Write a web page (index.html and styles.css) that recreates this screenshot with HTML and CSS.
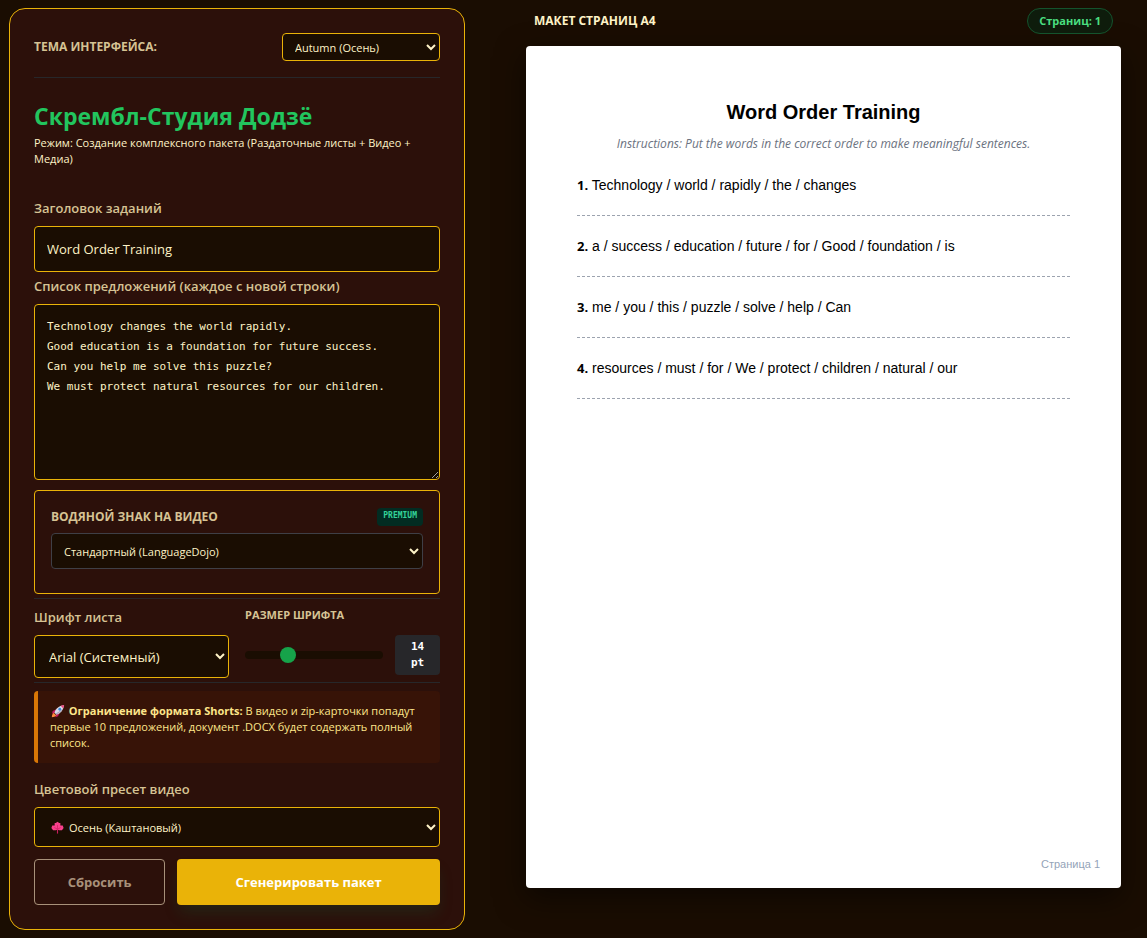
FILE: index.html
```
<!DOCTYPE html>
<html lang="ru">
<head>
    <meta charset="UTF-8">
    <meta name="viewport" content="width=device-width, initial-scale=1.0">
    <title>Скрембл-Студия Додзё</title>
    <link rel="stylesheet" href="styles.css">
</head>
<body>
    <div class="layout">
        <form class="panel" id="studioForm">
            <div class="theme-row">
                <label class="caps-label" for="theme">Тема интерфейса:</label>
                <select class="theme-select" id="theme">
                    <option>Autumn (Осень)</option>
                </select>
            </div>

            <header class="intro">
                <h1>Скрембл-Студия Додзё</h1>
                <p>Режим: Создание комплексного пакета (Раздаточные листы + Видео + Медиа)</p>
            </header>

            <div class="field">
                <label for="title">Заголовок заданий</label>
                <input type="text" id="title" value="Word Order Training">
            </div>

            <div class="field">
                <label for="sentences">Список предложений (каждое с новой строки)</label>
                <textarea id="sentences" spellcheck="false">Technology changes the world rapidly.
Good education is a foundation for future success.
Can you help me solve this puzzle?
We must protect natural resources for our children.</textarea>
            </div>

            <div class="watermark">
                <div class="watermark-head">
                    <label class="caps-label" for="watermark">Водяной знак на видео</label>
                    <span class="premium">PREMIUM</span>
                </div>
                <select class="watermark-select" id="watermark">
                    <option>Стандартный (LanguageDojo)</option>
                </select>
            </div>

            <div class="font-row">
                <div class="font-col">
                    <label for="font">Шрифт листа</label>
                    <select class="font-select" id="font">
                        <option>Arial (Системный)</option>
                    </select>
                </div>
                <div class="font-col">
                    <label class="size-label" for="size">Размер шрифта</label>
                    <div class="size-row">
                        <input type="range" id="size" min="10" max="24" value="14">
                        <output class="size-value" for="size">14 pt</output>
                    </div>
                </div>
            </div>

            <div class="notice">
                <svg class="rocket" viewBox="0 0 16 16" aria-hidden="true">
                    <path d="M6 6 2 8 1 11 5 10z" fill="#c2185b"/>
                    <path d="M10 10 8 14 5 15 6 11z" fill="#c2185b"/>
                    <path d="M3 10C1 12 1 14 1 15 3 15 5 14 6 13z" fill="#ff8a3d"/>
                    <path d="M4 10C5 5 9 2 15 1 14 7 11 11 6 12z" fill="#d9dbe8"/>
                    <path d="M11 2 15 1 14 5z" fill="#f0447c"/>
                    <path d="M6 12C10 10 13 7 14 5L10 8 5 11z" fill="#a7a5bb"/>
                    <circle cx="10" cy="6" r="1.6" fill="#3b8ad8"/>
                </svg>
                <strong>Ограничение формата Shorts:</strong> В видео и zip-карточки попадут первые 10 предложений, документ .DOCX будет содержать полный список.
            </div>

            <div class="field">
                <label for="preset">Цветовой пресет видео</label>
                <div class="preset-wrap">
                    <svg class="leaf" viewBox="0 0 16 16" aria-hidden="true">
                        <path d="M7.300 9H8.700V15.500H7.300z" fill="#c81e5f"/>
                        <path d="M8 1 10 2.500 11.500 2.500 11.500 5.500 14.500 5.500 15.500 8.500 13.500 11.500 10 11.500 8 10.500 6 11.500 2.500 11.500 .5 8.500 1.500 5.500 4.500 5.500 4.500 2.500 6 2.500z" fill="#f8408c"/>
                        <path d="M8 5V11M8 10 4 8M8 10 12 8" stroke="#d42468" stroke-width="1" fill="none"/>
                    </svg>
                    <select class="preset-select" id="preset">
                        <option>Осень (Каштановый)</option>
                    </select>
                </div>
            </div>

            <div class="actions">
                <button type="reset" class="btn-reset">Сбросить</button>
                <button type="button" class="btn-generate">Сгенерировать пакет</button>
            </div>
        </form>

        <main class="preview">
            <div class="preview-head">
                <h2>Макет страниц A4</h2>
                <span class="page-count">Страниц: 1</span>
            </div>

            <article class="sheet">
                <h3>Word Order Training</h3>
                <p class="instructions">Instructions: Put the words in the correct order to make meaningful sentences.</p>
                <div class="task"><b>1.</b> Technology / world / rapidly / the / changes</div>
                <div class="task"><b>2.</b> a / success / education / future / for / Good / foundation / is</div>
                <div class="task"><b>3.</b> me / you / this / puzzle / solve / help / Can</div>
                <div class="task"><b>4.</b> resources / must / for / We / protect / children / natural / our</div>
                <footer>Страница 1</footer>
            </article>
        </main>
    </div>
</body>
</html>
```
FILE: styles.css
```
* {
    box-sizing: border-box;
}

body {
    margin: 0;
    background: #1a0d02;
    color: #fef3c7;
    font-family: "Open Sans", "Noto Sans", sans-serif;
    font-size: 11px;
    line-height: 16px;
}

h1, h2, h3, p {
    margin: 0;
}

.layout {
    display: grid;
    grid-template-columns: 456fr 595fr;
    gap: 61px;
    align-items: start;
    padding: 8px 26px 8px 9px;
}

/* Settings panel */
.panel {
    display: flex;
    flex-direction: column;
    padding: 24px;
    background: #2c100a;
    border: 1px solid #eab308;
    border-radius: 16px;
}

label {
    display: block;
    color: #d6c394;
    font-size: 13px;
    font-weight: 600;
    line-height: 20px;
}

.caps-label {
    font-size: 12px;
    font-weight: 700;
    text-transform: uppercase;
}

input, select, textarea, button {
    font-family: inherit;
}

select, textarea, input[type="text"] {
    width: 100%;
    background-color: #1a0d02;
    color: #fef3c7;
    border: 1px solid #eab308;
    border-radius: 4px;
}

select {
    font-size: 11px;
}

.theme-row {
    display: flex;
    align-items: center;
    justify-content: space-between;
    padding-bottom: 16px;
    border-bottom: 1px solid #27272a;
}

.theme-select {
    width: 158px;
    height: 28px;
    padding: 0 8px;
}

.intro {
    padding: 22px 0 31px;
}

h1 {
    margin-bottom: 3px;
    color: #22c55e;
    font-size: 23px;
    font-weight: 700;
    line-height: 32px;
}

.field label {
    margin-bottom: 8px;
}

.field input {
    display: block;
    height: 46px;
    margin-bottom: 4px;
    padding: 0 12px;
    font-size: 13px;
}

textarea {
    display: block;
    height: 176px;
    padding: 12px;
    font-family: "DejaVu Sans Mono", monospace;
    font-size: 11px;
    line-height: 20px;
    resize: vertical;
}

.watermark {
    margin: 10px 0 4px;
    padding: 16px 16px 24px;
    border: 1px solid #eab308;
    border-radius: 4px;
}

.watermark-head {
    display: flex;
    align-items: center;
    justify-content: space-between;
    margin-bottom: 6px;
}

.premium {
    padding: 0 6px 2px;
    border-radius: 4px;
    background: #022c22;
    color: #34d399;
    font-family: "DejaVu Sans Mono", monospace;
    font-size: 8px;
    font-weight: 700;
}

.watermark-select {
    height: 36px;
    padding: 0 8px;
    border-color: #3f3f46;
}

.font-row {
    display: grid;
    grid-template-columns: 1fr 1fr;
    gap: 16px;
    padding: 8px 0 4px;
    border: solid #27272a;
    border-width: 1px 0;
}

.font-col label {
    margin-bottom: 8px;
}

.font-col .size-label {
    margin-bottom: 12px;
    font-size: 11px;
    font-weight: 700;
    line-height: 16px;
    text-transform: uppercase;
}

.font-select {
    height: 43px;
    padding: 0 10px;
    font-size: 13px;
}

.size-row {
    display: flex;
    align-items: center;
    gap: 12px;
}

input[type="range"] {
    flex: 1;
    min-width: 0;
    height: 8px;
    margin: 0;
    appearance: none;
    background: #1a0d02;
    border-radius: 4px;
}

input[type="range"]::-webkit-slider-thumb {
    width: 16px;
    height: 16px;
    appearance: none;
    background: #16a34a;
    border-radius: 50%;
}

.size-value {
    width: 45px;
    padding: 4px 12px;
    border-radius: 4px;
    background: #27272a;
    color: #fff;
    font-family: "DejaVu Sans Mono", monospace;
    font-size: 11px;
    font-weight: 700;
    text-align: center;
}

.notice {
    margin: 8px 0 16px;
    padding: 12px;
    border-left: 4px solid #d97706;
    border-radius: 4px;
    background: #371307;
    color: #fde68a;
}

.rocket {
    width: 14px;
    height: 14px;
    margin: 0 1px;
    vertical-align: -3px;
}

.preset-wrap {
    position: relative;
}

.leaf {
    position: absolute;
    top: 14px;
    left: 17px;
    width: 13px;
    height: 13px;
}

.preset-select {
    display: block;
    height: 40px;
    padding: 0 8px 0 30px;
}

.actions {
    display: grid;
    grid-template-columns: 1fr 2fr;
    gap: 12px;
    margin-top: 12px;
}

button {
    height: 46px;
    border-radius: 4px;
    font-size: 13px;
    font-weight: 700;
    cursor: pointer;
}

.btn-reset {
    background: transparent;
    border: 1px solid #a8917a;
    color: #a8917a;
}

.btn-generate {
    background: #eab308;
    border: none;
    color: #fff;
    box-shadow: 0 10px 15px -3px rgba(20, 83, 45, 0.3);
}

/* A4 preview */
.preview-head {
    display: flex;
    align-items: center;
    justify-content: space-between;
    margin-bottom: 12px;
    padding: 0 8px;
}

h2 {
    font-size: 12px;
    font-weight: 700;
    text-transform: uppercase;
}

.page-count {
    padding: 4px 11px;
    border: 1px solid #14532d;
    border-radius: 13px;
    background: #0e1c0c;
    color: #4ade80;
    font-weight: 700;
}

.sheet {
    display: flex;
    flex-direction: column;
    aspect-ratio: 595 / 842;
    padding: 50px 51px 16px;
    border-radius: 4px;
    background: #fff;
    box-shadow: 0 10px 30px rgba(0, 0, 0, 0.5);
    color: #000;
    font-family: "Liberation Sans", Arial, sans-serif;
}

h3 {
    font-size: 20px;
    line-height: 32px;
    text-align: center;
}

.instructions {
    margin: 8px 0 20px;
    color: #6b7280;
    font-family: "Open Sans", sans-serif;
    font-size: 12px;
    font-style: italic;
    text-align: center;
}

.task {
    height: 44px;
    margin-bottom: 17px;
    border-bottom: 1px dashed #9ca3af;
    font-size: 14px;
    line-height: 26px;
}

.task b {
    font-family: "Open Sans", sans-serif;
    font-size: 13px;
}

.sheet footer {
    margin: auto -30px 0 0;
    color: #94a3b8;
    text-align: right;
}
```
